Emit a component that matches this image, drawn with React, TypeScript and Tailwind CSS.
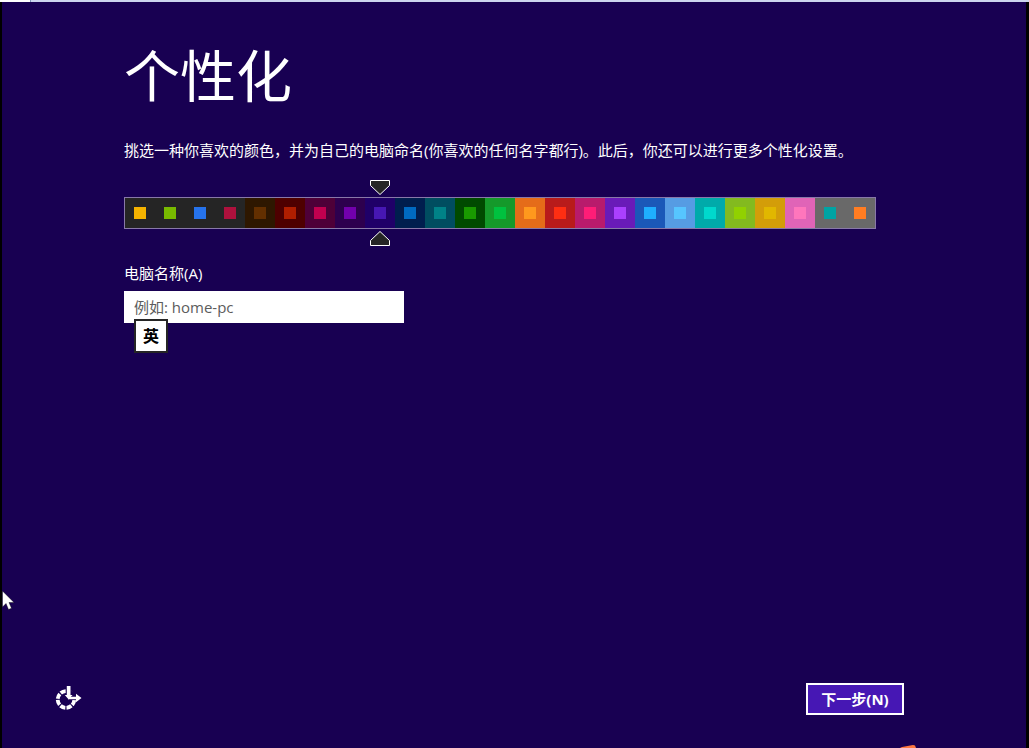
import { useState } from 'react';

const schemes = [
  { name: '黄色', bg: 'bg-[#252525]', accent: 'bg-[#f4b300]' },
  { name: '黄绿', bg: 'bg-[#252525]', accent: 'bg-[#78ba00]' },
  { name: '蓝色', bg: 'bg-[#252525]', accent: 'bg-[#2673ec]' },
  { name: '深红', bg: 'bg-[#252525]', accent: 'bg-[#ae113d]' },
  { name: '棕色', bg: 'bg-[#2e1700]', accent: 'bg-[#632f00]' },
  { name: '红色', bg: 'bg-[#4e0000]', accent: 'bg-[#b01e00]' },
  { name: '玫红', bg: 'bg-[#4e0038]', accent: 'bg-[#c1004f]' },
  { name: '紫色', bg: 'bg-[#2d004e]', accent: 'bg-[#7200ac]' },
  { name: '蓝紫', bg: 'bg-[#1f0068]', accent: 'bg-[#4617b4]' },
  { name: '深蓝', bg: 'bg-[#001e4e]', accent: 'bg-[#006ac1]' },
  { name: '青色', bg: 'bg-[#004d60]', accent: 'bg-[#008287]' },
  { name: '深绿', bg: 'bg-[#004a00]', accent: 'bg-[#199900]' },
  { name: '绿色', bg: 'bg-[#15992a]', accent: 'bg-[#00c13f]' },
  { name: '橙色', bg: 'bg-[#e56c19]', accent: 'bg-[#ff981d]' },
  { name: '大红', bg: 'bg-[#b81b1b]', accent: 'bg-[#ff2e12]' },
  { name: '洋红', bg: 'bg-[#b81b6c]', accent: 'bg-[#ff1d77]' },
  { name: '亮紫', bg: 'bg-[#691bb8]', accent: 'bg-[#aa40ff]' },
  { name: '亮蓝', bg: 'bg-[#1b58b8]', accent: 'bg-[#1faeff]' },
  { name: '天蓝', bg: 'bg-[#569ce3]', accent: 'bg-[#56c5ff]' },
  { name: '蓝绿', bg: 'bg-[#00aaaa]', accent: 'bg-[#00d8cc]' },
  { name: '草绿', bg: 'bg-[#83ba1f]', accent: 'bg-[#91d100]' },
  { name: '金色', bg: 'bg-[#d39d09]', accent: 'bg-[#e1b700]' },
  { name: '粉色', bg: 'bg-[#e064b7]', accent: 'bg-[#ff76bc]' },
  { name: '灰青', bg: 'bg-[#696969]', accent: 'bg-[#00a4a4]' },
  { name: '灰橙', bg: 'bg-[#696969]', accent: 'bg-[#ff7d23]' },
];

const SWATCH = 30;

function EaseOfAccessIcon() {
  return (
    <svg width="28" height="28" viewBox="0 0 28 28" fill="none" aria-hidden="true">
      <circle cx="12" cy="14.5" r="8.3" stroke="#fff" strokeWidth="3.8" strokeDasharray="5.3 1.22" strokeDashoffset="-0.6" />
      <path d="M12 0h5.500v6l7 1v8H17l-5-1z" fill="#180052" />
      <path d="M12.800 1h3.700v9h2l-3.800 4.500L10.800 10h2z" fill="#fff" />
      <path d="M15.500 11.800h6.500V8.800l5.500 4.200-5.500 4.200V14.300h-8z" fill="#fff" />
    </svg>
  );
}

export default function App() {
  const [selected, setSelected] = useState(8);
  const [pcName, setPcName] = useState('');

  const markerStyle = { marginLeft: selected * SWATCH + 6 };

  return (
    <div className="relative flex min-h-screen flex-col overflow-hidden bg-[#180052] font-['Open_Sans','Noto_Sans_CJK_SC',sans-serif] text-[15px] leading-5 text-white">
      {/* Edge of the window behind */}
      <div className="flex h-0.5 bg-[#ccd5ee]">
        <div className="w-[31px] border-r border-[#7d93b5] bg-white"></div>
      </div>

      <div className="flex flex-1 flex-col border-l-2 border-r-3 border-black px-[122px]">
        <main className="pt-9">
          <h1 className="text-[56px] leading-[74px]">个性化</h1>
          <p className="mt-7 whitespace-nowrap">
            挑选一种你喜欢的颜色，并为自己的电脑命名(你喜欢的任何名字都行)。此后，你还可以进行更多个性化设置。
          </p>

          {/* Color picker */}
          <fieldset className="mt-5" aria-label="颜色">
            <svg style={markerStyle} width="20" height="15" viewBox="0 0 20 15" className="block" aria-hidden="true">
              <path d="M0.500 0.500h19v5L10 14.500L0.500 5.500z" fill="#252525" stroke="#fff" />
            </svg>
            <div className="my-0.5 flex w-fit border border-[#8878a8]">
              {schemes.map((scheme, i) => (
                <label key={scheme.name} className={`flex size-[30px] items-center justify-center ${scheme.bg}`}>
                  <input
                    type="radio"
                    name="scheme"
                    aria-label={scheme.name}
                    checked={selected === i}
                    onChange={() => setSelected(i)}
                    className={`size-3 appearance-none ${scheme.accent}`}
                  />
                </label>
              ))}
            </div>
            <svg style={markerStyle} width="20" height="15" viewBox="0 0 20 15" className="block" aria-hidden="true">
              <path d="M0.500 14.500h19v-5L10 0.500L0.500 9.500z" fill="#252525" stroke="#fff" />
            </svg>
          </fieldset>

          {/* PC name */}
          <div className="mt-[17px]">
            <label htmlFor="pc-name" className="block">电脑名称(A)</label>
            <div className="relative mt-2 w-[280px]">
              <input
                id="pc-name"
                type="text"
                accessKey="a"
                value={pcName}
                onChange={(e) => setPcName(e.target.value)}
                placeholder="例如: home-pc"
                className="block h-8 w-full bg-white px-2.5 text-black outline-none placeholder:text-[#5c5c5c]"
              />
              {/* Input method indicator */}
              <div className="absolute top-7 left-2.5 flex size-[34px] items-center justify-center border-2 border-[#252525] bg-white text-base font-bold text-black">
                英
              </div>
            </div>
          </div>
        </main>

        <footer className="-ml-[70px] mt-auto flex items-center justify-between pb-[33px]">
          <button type="button" aria-label="轻松使用">
            <EaseOfAccessIcon />
          </button>
          <button type="submit" accessKey="n" className="h-8 w-[98px] border-2 border-white bg-[#4617b4] font-bold">
            下一步(N)
          </button>
        </footer>
      </div>

      {/* Mouse pointer */}
      <svg className="absolute top-[590px] left-0.5" width="13" height="20" viewBox="0 0 13 20" aria-hidden="true">
        <path d="M0.500 1v16l3.500-3.500L6.500 19.500l3-1.300L7 12.500H12z" fill="#fff" stroke="#000" strokeWidth="0.400" />
      </svg>

      <svg className="absolute bottom-0 left-[900px]" width="17" height="3" viewBox="0 0 17 3" aria-hidden="true">
        <path d="M0 3l2-1L13 0l2 .5 1 2.500z" fill="#ff7840" />
      </svg>
    </div>
  );
}
